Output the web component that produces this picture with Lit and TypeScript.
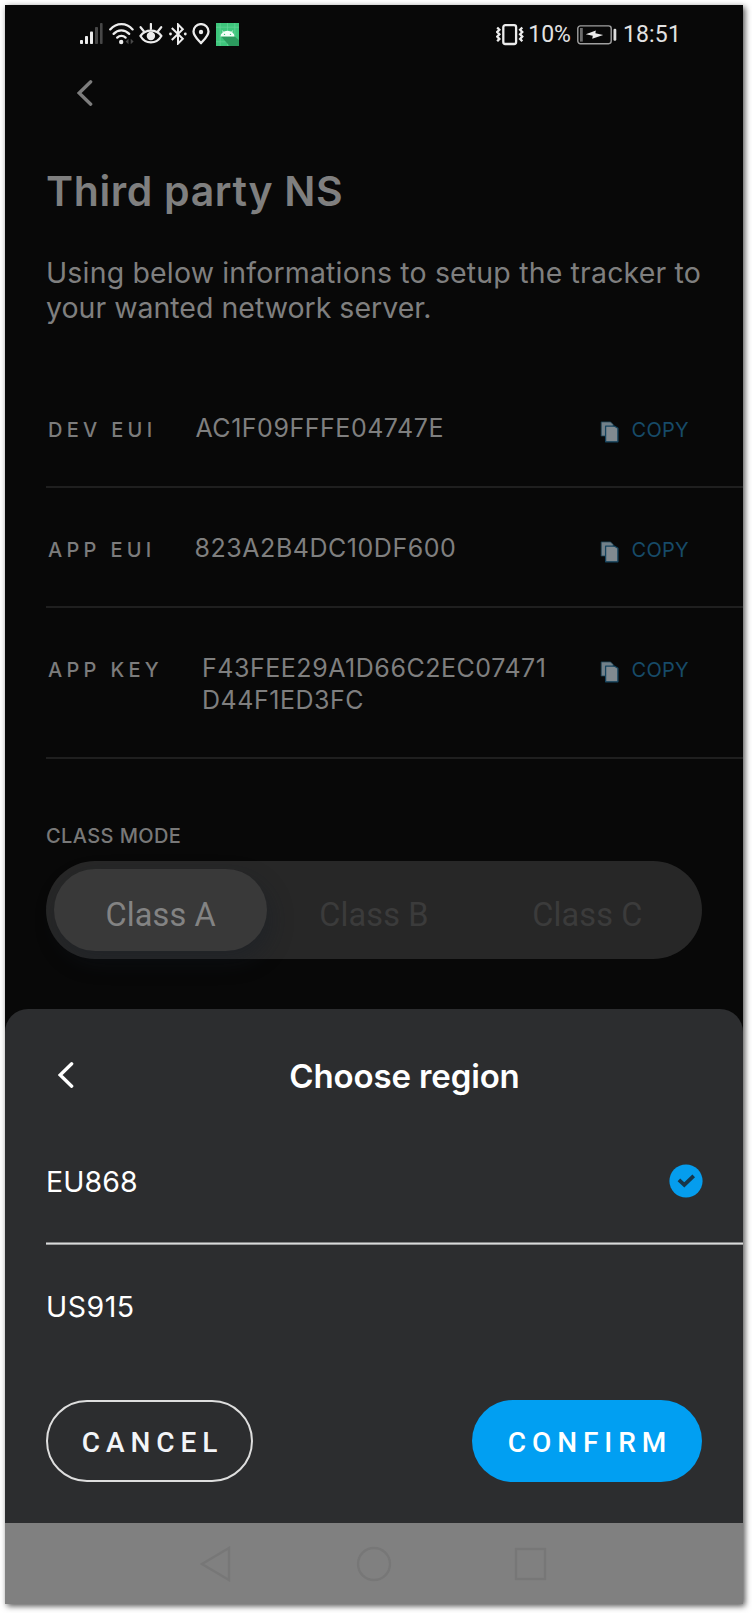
import { LitElement, html, svg, css } from "lit";
import { customElement, property, state } from "lit/decorators.js";
import { classMap } from "lit/directives/class-map.js";

const signalIcon = html`<svg width="23" height="22" viewBox="0 0 23 22">
  <g fill="#ececec"><rect x="0" y="17" width="3" height="4" rx=".8"/><rect x="5" y="13" width="3" height="8" rx=".8"/><rect x="10" y="8.5" width="3" height="12.5" rx=".8"/></g>
  <g fill="#474747"><rect x="15" y="4" width="3" height="17" rx=".8"/><rect x="20" y="0" width="2.6" height="21" rx=".8"/></g></svg>`;

const wifiIcon = html`<svg width="25" height="22" viewBox="0 0 25 22" fill="none" stroke="#ececec" stroke-width="2.3" stroke-linecap="round">
  <path d="M1.2 6.4C7.5-.6 17.5-.6 23.6 6.4"/><path d="M4.6 10.9c4.4-4.600 11-4.600 15.600 0"/><path d="M8.200 14.600c2.400-2.400 6-2.400 8.400 0"/>
  <circle cx="12.200" cy="19" r="2.200" fill="#ececec" stroke="none"/>
  <path d="M19.500 15.800v5.400l-2.900-2.700zM21.700 15.800v5.400l2.900-2.700z" fill="#4a4a4a" stroke="none"/></svg>`;

const eyeIcon = html`<svg width="24" height="22" viewBox="0 0 24 22" fill="none" stroke="#ececec" stroke-width="2.200" stroke-linecap="round">
  <path d="M1.400 13C6.500 5.800 17.300 5.800 22.400 13C17.300 21.600 6.500 21.600 1.400 13z" stroke-linejoin="round"/>
  <circle cx="11.900" cy="13" r="4.200" fill="#ececec" stroke="none"/>
  <path d="M11.900 1v5M1.600 4.200l3.200 4M22.200 4.200l-3.200 4"/></svg>`;

const bluetoothIcon = html`<svg width="18" height="22" viewBox="0 0 18 22" fill="none" stroke="#ececec" stroke-width="2">
  <path d="M2.800 5l11 10.800L9 20.600V1.400l4.800 4.800L2.800 17"/>
  <g fill="#ececec" stroke="none"><circle cx="1.500" cy="11" r="1.400"/><circle cx="16.300" cy="11" r="1.400"/></g></svg>`;

const pinIcon = html`<svg width="18" height="22" viewBox="0 0 18 22" fill="none" stroke="#ececec" stroke-width="2.300">
  <path d="M9 20.200C5.500 16.200 1.500 12.600 1.500 8.400a7.500 7.300 0 0 1 15 0C16.500 12.600 12.500 16.200 9 20.200z" stroke-linejoin="round"/>
  <circle cx="9" cy="9" r="2.200" fill="#ececec" stroke="none"/></svg>`;

const androidIcon = html`<svg width="23" height="23" viewBox="0 0 23 23">
  <rect width="23" height="23" fill="#3ec67c"/>
  <path d="M4.200 0v23M11.500 0v23M18.800 0v23M0 4.200h23M0 18.800h23" stroke="#66d699" stroke-width=".7"/>
  <path d="M5 13.200h13.500l4.500 4V23h-9.500z" fill="#2c9a5e"/>
  <path d="M4.500 13.400a7 5.600 0 0 1 14 0z" fill="#f3fff8"/>
  <path d="M7.600 9.300L6.400 7.600M15.400 9.300l1.200-1.700" stroke="#f3fff8" stroke-width=".9"/>
  <g fill="#3ec67c"><circle cx="8.500" cy="11.400" r=".7"/><circle cx="14.500" cy="11.400" r=".7"/></g></svg>`;

const vibrateIcon = html`<svg width="28" height="22" viewBox="0 0 28 22" fill="none" stroke="#ececec">
  <rect x="7.300" y="1.200" width="12.800" height="18.800" rx="2" stroke-width="2.300"/>
  <path d="M1.200 3.500L3.400 5.700 1.200 8 3.400 10.300 1.200 12.600 3.400 14.900 1.200 17.200M26.300 3.500L24.100 5.700 26.300 8 24.100 10.300 26.300 12.600 24.100 14.900 26.300 17.200" stroke-width="2.300"/></svg>`;

const batteryIcon = html`<svg width="40" height="20" viewBox="0 0 40 20">
  <rect x=".8" y=".9" width="33.400" height="17.800" rx="2.600" fill="none" stroke="#a0a0a0" stroke-width="1.400"/>
  <rect x="3" y="3" width="2.800" height="13.600" fill="#6c6c6c"/>
  <path d="M8.800 9.300L18.800 5.600l-.4 2.700 7.800 1.600L15.200 13.800l.6-3z" fill="#ececec"/>
  <rect x="36.500" y="3.800" width="2.800" height="12" rx="1.200" fill="#dcdcdc"/></svg>`;

const chevron = (color: string) => html`<svg width="16" height="26" viewBox="0 0 16 26" fill="none">
  <path d="M13.700 1.800L2.200 13l11.500 11.200" stroke=${color} stroke-width="3.300" stroke-linecap="round"/></svg>`;

const copyIcon = html`<svg width="19" height="22" viewBox="0 0 19 22">
  <path d="M1.200.9h9.400l2.600 2.600v11.500H1.200z" fill="#72818a" stroke="#1b4256" stroke-width=".8"/>
  <path d="M5.600 5.200h9l3.300 2v13.600H5.600z" fill="#808a90" stroke="#154560" stroke-width="1.300" stroke-linejoin="round"/></svg>`;

@customElement("status-bar")
class StatusBar extends LitElement {
  static styles = css`
    :host { display: flex; align-items: center; height: 58px; padding: 0 62px 0 75px; font: 400 23px/30px Roboto, sans-serif; color: #e2e2e2; }
    svg { display: block; flex: none; }
    .left, .right { display: flex; align-items: center; }
    .left { gap: 5.600px; }
    .right { margin-left: auto; padding-top: 2px; }
    .level { margin: 0 6px 0 4px; }
    .time { margin-left: 6px; letter-spacing: .150px; }
  `;
  render() {
    return html`
      <div class="left">${signalIcon}${wifiIcon}${eyeIcon}${bluetoothIcon}${pinIcon}${androidIcon}</div>
      <div class="right">${vibrateIcon}<span class="level">10%</span>${batteryIcon}<span class="time">18:51</span></div>`;
  }
}

@customElement("key-row")
class KeyRow extends LitElement {
  @property() label = "";
  @property({ attribute: false }) lines: string[] = [];
  static styles = css`
    :host { display: flex; align-items: flex-start; box-sizing: border-box; min-height: 120px; margin-left: 41px; padding: 44px 54px 38px 2px; border-bottom: 2px solid #1f1f1f; }
    .label { font: 500 20px/36px Inter, sans-serif; letter-spacing: 4.300px; color: #7c7c7c; margin-right: 39px; }
    .value { padding-bottom: 3px; font: 400 25px/32px Inter, sans-serif; letter-spacing: .530px; color: #7f7f7f; }
    .line { display: block; }
    .copy { display: flex; align-items: center; gap: 12.500px; margin-left: auto; font: 400 20px/36px Inter, sans-serif; letter-spacing: .300px; color: #174b68; }
    svg { display: block; position: relative; top: 2px; }
  `;
  render() {
    return html`<span class="label">${this.label}</span>
      <span class="value">${this.lines.map((l) => html`<span class="line">${l}</span>`)}</span>
      <span class="copy">${copyIcon}COPY</span>`;
  }
}

@customElement("region-sheet")
class RegionSheet extends LitElement {
  @state() selected = "EU868";
  static styles = css`
    :host { display: flex; flex-direction: column; box-sizing: border-box; height: 514px; padding-top: 46px; background: #2c2d2f; border-radius: 23px 23px 0 0; color: #fff; }
    svg { display: block; flex: none; }
    .head { display: flex; align-items: center; height: 40px; padding: 0 8px 0 53px; }
    .title { flex: 1; margin: 0; padding-top: 1px; text-align: center; font: 600 33px/40px Inter, sans-serif; letter-spacing: -.140px; }
    .options { margin: 25px 0 0 41px; }
    .option { display: flex; align-items: center; justify-content: space-between; height: 122px; padding-right: 40.500px; font: 400 28.500px/34px Inter, sans-serif; letter-spacing: .500px; }
    .option:first-child { letter-spacing: .100px; }
    .name { padding-top: 2px; }
    .rule { height: 3px; background: linear-gradient(#858687 0 1px, #d9dadb 1px 2px, #9b9c9d 2px 3px); }
    .actions { display: flex; justify-content: space-between; padding: 0 41px; margin-top: 33px; }
    .btn { box-sizing: border-box; height: 82px; border: 0; border-radius: 41px; padding: 4px 0 0 6px; color: #fff; font: 500 28px/34px Roboto, sans-serif; letter-spacing: 5.930px; }
    .cancel { width: 207px; border: 2px solid #dedede; background: none; color: #f3f5f8; }
    .confirm { width: 230px; background: #019ff2; }
  `;
  render() {
    return html`
      <div class="head">${chevron("#ffffff")}<h2 class="title">Choose region</h2></div>
      <div class="options">
        ${["EU868", "US915"].map((r, i) => html`${i ? html`<div class="rule"></div>` : ""}
          <div class="option" @click=${() => (this.selected = r)}><span class="name">${r}</span>
            ${this.selected === r ? html`<svg width="34" height="34" viewBox="0 0 34 34"><circle cx="17" cy="17" r="16.600" fill="#059dee"/>
              <path d="M9.900 15.900l5.400 5 9.400-9" fill="none" stroke="#17364a" stroke-width="3.800"/></svg>` : ""}
          </div>`)}
      </div>
      <div class="actions"><button class="btn cancel">CANCEL</button><button class="btn confirm">CONFIRM</button></div>`;
  }
}

@customElement("app-root")
class AppRoot extends LitElement {
  @state() mode = "Class A";
  static styles = css`
    :host { display: block; box-sizing: border-box; height: 1613px; padding: 5px 9px 9px 5px; background: #fff; overflow: hidden; }
    svg { display: block; }
    .phone { display: flex; flex-direction: column; width: 738px; height: 1599px; background: #080808; box-shadow: 2px 2px 6px rgba(0, 0, 0, .680); color: #808080; }
    .body { height: 946px; }
    .back { display: block; padding: 17px 0 0 72px; }
    h1 { margin: 60px 0 0 41px; font: 600 41px/50px Inter, sans-serif; letter-spacing: .640px; color: #7f7f7f; }
    .intro { margin: 39px 0 43px 41px; font: 400 28.500px/35px Inter, sans-serif; color: #7f7f7f; white-space: nowrap; }
    .first { letter-spacing: .160px; }
    .caption { margin: 65px 0 0 41px; font: 500 20px/24px Inter, sans-serif; letter-spacing: .400px; color: #787878; }
    .segments { display: grid; grid-template-columns: repeat(3, 1fr); box-sizing: border-box; height: 98px; margin: 12.500px 41px 0; padding: 8px; border-radius: 49px; background: #272727; }
    .segment { display: flex; align-items: center; justify-content: center; padding-top: 10px; border-radius: 41px; font: 400 32.500px/38px Roboto, sans-serif; letter-spacing: .120px; color: #3b3b3b; }
    .active { background: #393939; color: #838383; box-shadow: 4px 10px 22px rgba(20, 28, 40, .350); }
    .nav { display: flex; justify-content: center; align-items: center; height: 81px; gap: 120px; background: #808080; }
  `;
  render() {
    return html`<div class="phone">
      <status-bar></status-bar>
      <div class="body">
        <div class="back">${chevron("#7d7d7d")}</div>
        <h1>Third party NS</h1>
        <div class="intro"><span class="first">Using below informations to setup the tracker to</span><br>your wanted network server.</div>
        <key-row label="DEV EUI" .lines=${["AC1F09FFFE04747E"]}></key-row>
        <key-row label="APP EUI" .lines=${["823A2B4DC10DF600"]}></key-row>
        <key-row label="APP KEY" .lines=${["F43FEE29A1D66C2EC07471", "D44F1ED3FC"]}></key-row>
        <div class="caption">CLASS MODE</div>
        <div class="segments">${["Class A", "Class B", "Class C"].map((m) => html`
          <div class=${classMap({ segment: true, active: m === this.mode })} @click=${() => (this.mode = m)}>${m}</div>`)}</div>
      </div>
      <region-sheet></region-sheet>
      <div class="nav">
        ${[svg`<path d="M29 2v32L2 18z"/>`, svg`<circle cx="18" cy="18" r="16"/>`, svg`<rect x="4" y="3" width="29" height="30"/>`].map(
          (s) => html`<svg width="36" height="36" viewBox="0 0 36 36" fill="none" stroke="#777777" stroke-width="2.400">${s}</svg>`)}
      </div>
    </div>`;
  }
}
